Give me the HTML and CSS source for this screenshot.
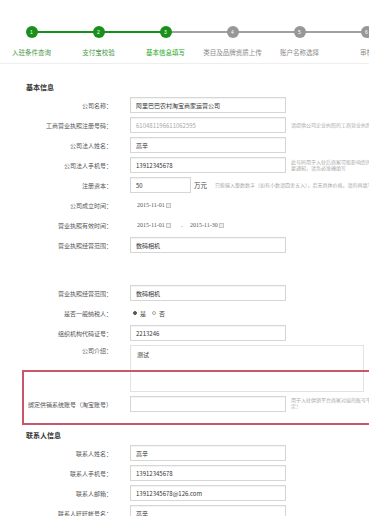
FILE: index.html
```html
<!DOCTYPE html>
<html lang="zh-CN">
<head>
  <meta charset="UTF-8">
  <title>基本信息填写</title>
  <link rel="stylesheet" href="styles.css">
</head>
<body>
  <div class="page">
    <ol class="steps">
      <li class="done"><i>1</i><span>入驻条件查询</span></li>
      <li class="done"><i>2</i><span>支付宝校验</span></li>
      <li class="done current"><i>3</i><span>基本信息填写</span></li>
      <li><i>4</i><span>类目及品牌资质上传</span></li>
      <li><i>5</i><span>账户名称选择</span></li>
      <li><i>6</i><span>审核</span></li>
    </ol>

    <h2>基本信息</h2>
    <ul class="form">
      <li>
        <label>公司名称：</label>
        <input class="text" type="text" value="阿里巴巴农村淘宝商家运营公司">
      </li>
      <li>
        <label>工商营业执照注册号码：</label>
        <input class="text muted" type="text" value="610481196611062595" readonly>
        <span class="tip">请提供公司企业执照的工商营业执照注册号码</span>
      </li>
      <li>
        <label>公司法人姓名：</label>
        <input class="text" type="text" value="高辛">
      </li>
      <li>
        <label>公司法人手机号：</label>
        <input class="text" type="text" value="13912345678">
        <span class="tip">此号码用于入驻后商家可能影响您的重<br>要通知，请务必准确填写</span>
      </li>
      <li>
        <label>注册资本：</label>
        <input class="text short" type="text" value="50">
        <span class="unit">万元</span>
        <span class="tip">只能输入整数数字（如有小数请四舍五入），若无具体价格，请的再填写</span>
      </li>
      <li>
        <label>公司成立时间：</label>
        <span class="date">2015-11-01<i class="cal"></i></span>
      </li>
      <li>
        <label>营业执照有效时间：</label>
        <span class="date">2015-11-01<i class="cal"></i></span>
        <span class="sep">-</span>
        <span class="date plain">2015-11-30<i class="cal"></i></span>
      </li>
      <li>
        <label>营业执照经营范围：</label>
        <input class="text" type="text" value="数码相机">
      </li>
      <li class="blank"></li>
      <li>
        <label>营业执照经营范围：</label>
        <input class="text" type="text" value="数码相机">
      </li>
      <li>
        <label>是否一般纳税人：</label>
        <span class="choice"><i class="radio on"></i>是<i class="radio"></i>否</span>
      </li>
      <li>
        <label>组织机构代码证号：</label>
        <input class="text" type="text" value="2213246">
      </li>
      <li class="area">
        <label>公司介绍：</label>
        <textarea>测试</textarea>
      </li>
      <li class="bind">
        <label>绑定供销系统账号（淘宝账号）</label>
        <input class="text" type="text" value="">
        <span class="tip">用于入驻供销平台商家对接的账号平台绑<br>定！</span>
      </li>
    </ul>

    <h2>联系人信息</h2>
    <ul class="form">
      <li>
        <label>联系人姓名：</label>
        <input class="text" type="text" value="高辛">
      </li>
      <li>
        <label>联系人手机号：</label>
        <input class="text" type="text" value="13912345678">
      </li>
      <li>
        <label>联系人邮箱：</label>
        <input class="text" type="text" value="13912345678@126.com">
      </li>
      <li>
        <label>联系人旺旺帐号名：</label>
        <input class="text" type="text" value="高辛">
      </li>
    </ul>
  </div>
</body>
</html>
```

FILE: styles.css
```css
* {
  box-sizing: border-box;
}
body {
  margin: 0;
  overflow: hidden;
  background: #fff;
  color: #555;
  font-family: "Noto Sans CJK SC", sans-serif;
}
.page {
  width: 369px;
  overflow: hidden;
}

/* steps */
.steps {
  display: flex;
  list-style: none;
  margin: 0;
  padding: 26px 0 7px;
  border-bottom: 1px solid #eee;
}
.steps li {
  position: relative;
  flex: 0 0 67px;
  display: flex;
  flex-direction: column;
  align-items: center;
}
.steps li:first-child {
  margin-left: -2px;
}
.steps li::before {
  content: "";
  position: absolute;
  top: 5px;
  left: -50%;
  right: 50%;
  height: 2px;
  background: #a0a0a0;
}
.steps li:first-child::before {
  display: none;
}
.steps li.done::before {
  background: #1b8f1b;
}
.steps i {
  position: relative;
  z-index: 1;
  width: 12px;
  height: 12px;
  border-radius: 50%;
  background: #979797;
  color: #fff;
  font: 5px/12px "Liberation Sans", sans-serif;
  font-style: normal;
  text-align: center;
}
.steps li.done i {
  background: #1b8f1b;
}
.steps span {
  margin-top: 10px;
  font-size: 6.5px;
  line-height: 8px;
  color: #8a8a8a;
  white-space: nowrap;
}
.steps li.done span {
  color: #4b9a4b;
}
.steps li.current span {
  color: #22a822;
}

/* form */
h2 {
  margin: 18px 0 5px 26px;
  font-size: 7px;
  line-height: 10px;
  font-weight: bold;
  color: #333;
}
.form {
  list-style: none;
  margin: 0;
  padding: 0 0 0 22px;
}
.form li {
  display: flex;
  align-items: center;
  height: 16px;
  margin-bottom: 4px;
}
.form li > * {
  flex-shrink: 0;
}
.form label {
  flex: 0 0 90px;
  margin-right: 18px;
  text-align: right;
  font-size: 6px;
  color: #555;
  white-space: nowrap;
}
.text {
  flex: 0 0 156px;
  width: 156px;
  height: 16px;
  margin: 0;
  padding: 0 5px;
  border: 1px solid #d6d6d6;
  outline: none;
  background: #fff;
  box-shadow: inset 0 1px 1px rgba(0, 0, 0, .05);
  font: 6px "Noto Sans CJK SC", sans-serif;
  color: #333;
}
.text.short {
  flex-basis: 61px;
  width: 61px;
}
.text.muted {
  color: #aaa;
}
.tip {
  margin-left: 5px;
  font-size: 5px;
  line-height: 6px;
  color: #aaa;
  white-space: nowrap;
}
.unit {
  margin-left: 3px;
  font-size: 6.5px;
  color: #444;
  white-space: nowrap;
}
.unit + .tip {
  margin-left: 8px;
}
.date {
  display: flex;
  align-items: center;
  padding-left: 7px;
  font: 6px "Liberation Serif", serif;
  color: #555;
  white-space: nowrap;
}
.date.plain {
  padding-left: 0;
}
.cal {
  width: 5px;
  height: 5px;
  margin-left: 1px;
  border: 1px solid #c4c4c4;
  background: #eee;
}
.sep {
  margin: 0 7px 0 10px;
  font-size: 6px;
  color: #888;
}
.form li.blank {
  height: 24px;
}
.choice {
  display: flex;
  align-items: center;
  padding-left: 1px;
  font-size: 6px;
  color: #444;
}
.radio {
  width: 4px;
  height: 4px;
  margin: 0 3px 0 6px;
  border: 1px solid #aaa;
  border-radius: 50%;
}
.radio.on {
  margin-left: 2px;
  border-color: #555;
  background: #555;
}
.form li.area {
  align-items: flex-start;
  height: 47px;
}
.form li.area label {
  line-height: 12px;
}
textarea {
  width: 234px;
  height: 47px;
  margin: 0;
  padding: 4px 6px;
  border: 1px solid #e2e2e2;
  outline: none;
  resize: none;
  font: 6px "Noto Sans CJK SC", sans-serif;
  color: #333;
}
.form li.bind {
  position: relative;
}
.form li.bind::after {
  content: "";
  position: absolute;
  top: -26px;
  bottom: -13px;
  left: 0;
  right: -30px;
  border: 2px solid #c9566b;
  pointer-events: none;
}
.form li.bind .tip {
  align-self: flex-start;
  margin-top: 1px;
}
```
